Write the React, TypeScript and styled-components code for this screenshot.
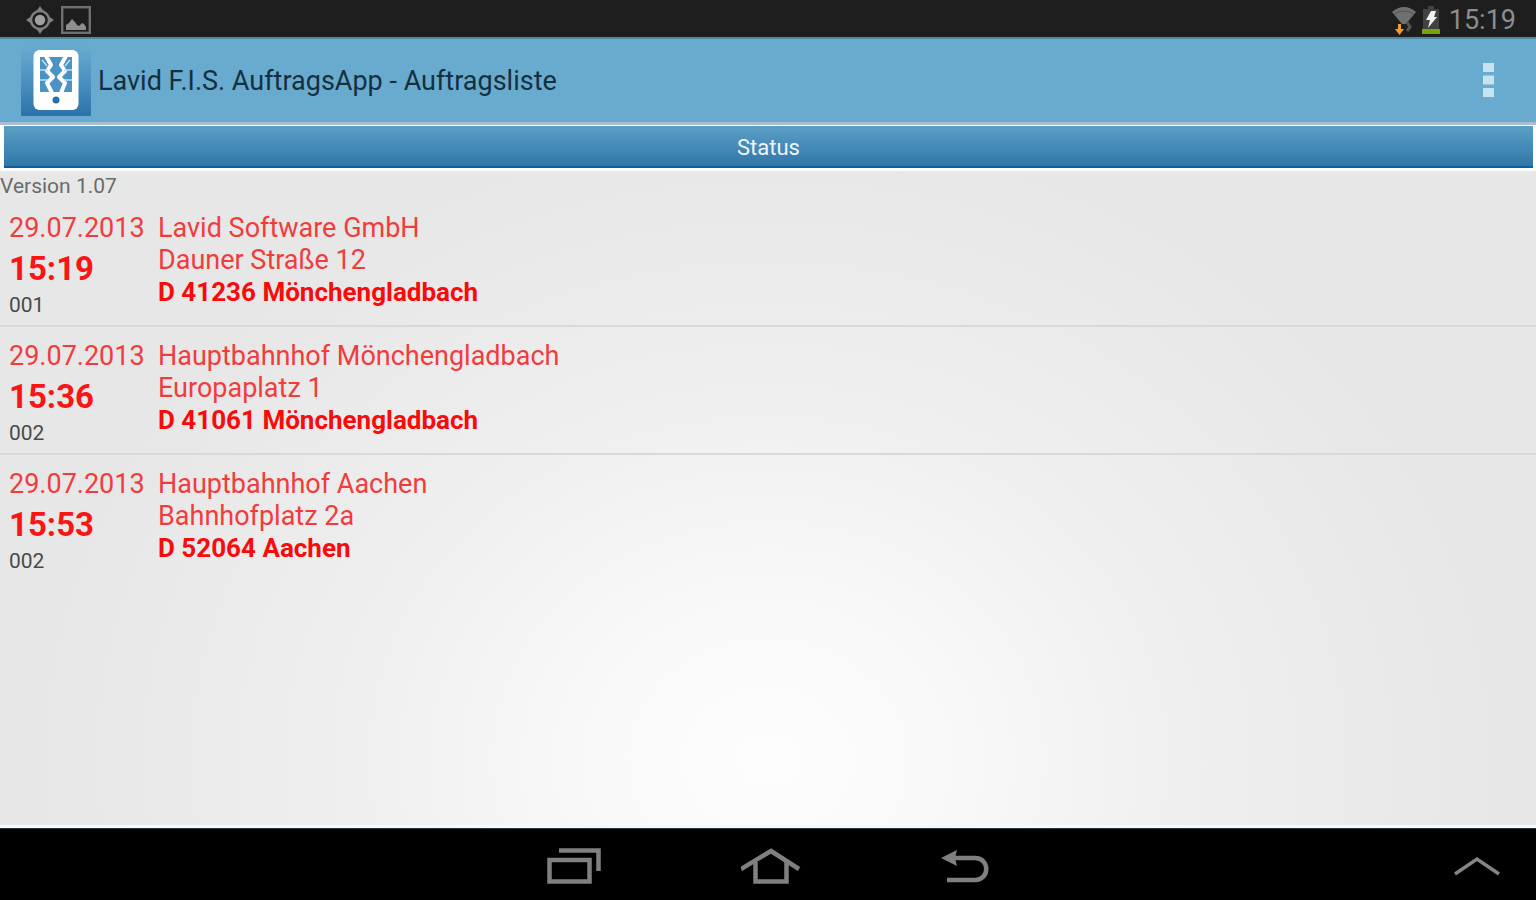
import React from "react";
import styled, { createGlobalStyle } from "styled-components";

const GlobalStyle = createGlobalStyle`
  *, *::before, *::after { box-sizing: border-box; }
  body { margin: 0; font-family: Roboto, "Liberation Sans", sans-serif; }
`;

const Screen = styled.div`
  min-height: 100vh;
  display: flex;
  flex-direction: column;
  background: #000;
`;

const SystemBar = styled.div`
  height: 37px;
  padding: 0 20px 0 26px;
  display: flex;
  align-items: center;
  justify-content: space-between;
  background: #1e1e1e;
  color: #8d8d8d;
`;

const IconGroup = styled.div<{ $gap: number }>`
  display: flex;
  align-items: center;
  gap: ${(p) => p.$gap}px;
  padding-top: 3px;
  svg { display: block; }
`;

const Clock = styled.time`
  padding-left: 4px;
  font-size: 27px;
  line-height: 32px;
`;

const AppBar = styled.header`
  height: 88px;
  padding: 0 42px 0 21px;
  display: flex;
  align-items: center;
  gap: 7px;
  background: #68abcf;
  border-top: 2px solid #4d88a8;
  border-bottom: 3px solid #a9bcd2;
`;

const Logo = styled.svg`
  display: block;
  flex: none;
`;

const Title = styled.h1`
  flex: 1;
  margin: 0;
  font-size: 27px;
  line-height: 32px;
  font-weight: 400;
  color: #14303f;
`;

const IconButton = styled.button`
  display: flex;
  padding: 0;
  border: 0;
  background: none;
  cursor: pointer;
  svg { display: block; }
`;

const StatusStrip = styled.div`
  display: flex;
  padding: 1px 3px 3px 4px;
  background: #fff;
`;

const StatusButton = styled.button`
  flex: 1;
  height: 42px;
  padding: 4px 0 0;
  border: 0;
  border-bottom: 2px solid #0d5f9b;
  background: linear-gradient(#5ba0c4, #468bb8 50%, #3077a8);
  color: #eef6fb;
  font-family: inherit;
  font-size: 22px;
  line-height: 26px;
  cursor: pointer;
`;

const Content = styled.main`
  flex: 1;
  border-bottom: 3px solid #f8f8fb;
  background: radial-gradient(ellipse 720px 620px at 50% 90%, #fdfdfd, #f9f9f9 24%, #efefef 58%, #e7e7e7);
`;

const Version = styled.p`
  margin: 0;
  padding-top: 3px;
  font-size: 21px;
  line-height: 25px;
  color: #6b6b6b;
`;

const OrderList = styled.ul`
  margin: 0;
  padding: 0;
  list-style: none;
`;

const OrderRow = styled.li`
  display: grid;
  grid-template-columns: 149px 1fr;
  height: 128px;
  padding: 13px 9px 0;
  color: #fb1414;
  border-bottom: 2px solid #d9d9d9;

  &:last-child { border-bottom: 0; }
`;

const Line = styled.div<{ $strong?: boolean }>`
  font-size: ${(p) => (p.$strong ? 26 : 27)}px;
  line-height: 32px;
  font-weight: ${(p) => (p.$strong ? 700 : 400)};
  color: ${(p) => (p.$strong ? "#fa0a0a" : "#f23c3c")};
`;

const Time = styled.div`
  font-size: 33px;
  line-height: 49px;
  font-weight: 700;
`;

const OrderNumber = styled.div`
  font-size: 21px;
  line-height: 24px;
  color: #4a4a4a;
`;

const NavBar = styled.nav`
  height: 72px;
  padding: 2px 36px 0;
  display: grid;
  grid-template-columns: 1fr auto 1fr;
  align-items: center;
  border-top: 1px solid #24384c;
  background: #000;
`;

const NavKeys = styled.div`
  grid-column: 2;
  display: flex;
  align-items: center;
  gap: 140px;
`;

const NavEnd = styled.div`
  display: flex;
  justify-content: flex-end;
`;

const orders = [
  { date: "29.07.2013", time: "15:19", number: "001", name: "Lavid Software GmbH", street: "Dauner Straße 12", city: "D 41236 Mönchengladbach" },
  { date: "29.07.2013", time: "15:36", number: "002", name: "Hauptbahnhof Mönchengladbach", street: "Europaplatz 1", city: "D 41061 Mönchengladbach" },
  { date: "29.07.2013", time: "15:53", number: "002", name: "Hauptbahnhof Aachen", street: "Bahnhofplatz 2a", city: "D 52064 Aachen" },
];

const GpsIcon = () => (
  <svg width="28" height="28" viewBox="0 0 28 28" fill="none" stroke="#808080">
    <circle cx="14" cy="14" r="9" strokeWidth="2.4" />
    <circle cx="14" cy="14" r="5.2" fill="#a0a0a0" stroke="none" />
    <path d="M14 0l3.5 5h-7zM14 28l3.5-5h-7zM0 14l5-3.5v7zM28 14l-5-3.5v7z" fill="#808080" stroke="none" />
  </svg>
);

const PictureIcon = () => (
  <svg width="30" height="28" viewBox="0 0 30 28">
    <rect x="1.2" y="1.2" width="27.6" height="25.6" fill="none" stroke="#707070" strokeWidth="2.4" />
    <path d="M5 24v-5l3-2 3-4 3 3 2 3 2 1 3-3 2 1 2 3v3z" fill="#8e8e8e" />
  </svg>
);

const WifiIcon = () => (
  <svg width="26" height="29" viewBox="0 0 26 29">
    <path d="M1 6Q13-4 25 6L15 18h-4z" fill="#707070" />
    <path d="M3 8Q13 2 23 8" fill="none" stroke="#555" strokeWidth="1" />
    <path d="M16 16l3 5-3 4" fill="none" stroke="#555" strokeWidth="3" />
    <path d="M7 18h3v5h3l-4.500 6L4 23h3z" fill="#f39a35" />
  </svg>
);

const BatteryIcon = () => (
  <svg width="18" height="28" viewBox="0 0 18 28">
    <path d="M6 0h6v3h5v25H1V3h5z" fill="#424242" />
    <rect x="0" y="23" width="18" height="5" fill="#77a30c" />
    <path d="M9 5h5l-2 6h3L6 22l2-8H4z" fill="#f2f2f2" />
  </svg>
);

const AppLogo = () => (
  <Logo width="70" height="70" viewBox="0 0 70 70" role="img" aria-label="Lavid">
    <defs>
      <linearGradient id="logoTile" x1="0" y1="0" x2="0" y2="1">
        <stop offset="0" stopColor="#68abcf" />
        <stop offset="0.5" stopColor="#4b92c2" />
        <stop offset="1" stopColor="#2c72ab" />
      </linearGradient>
    </defs>
    <rect width="70" height="70" fill="url(#logoTile)" />
    <rect x="12.500" y="4" width="45" height="60" rx="6" fill="#fff" />
    <rect x="19" y="11" width="32" height="35" fill="#4a93c3" />
    <path d="M25 10L30 19L26 25L32 31L26 37L31 47M45 10L40 19L44 25L38 31L44 37L40 47" fill="none" stroke="#fff" strokeWidth="4" strokeLinejoin="round" />
    <path d="M19 24h8M19 34h8M43 24h8M43 34h8M21 14l5 6M49 14l-5 6" stroke="#c2def0" strokeWidth="1.500" />
    <circle cx="35" cy="54" r="3.500" fill="#2571ad" />
  </Logo>
);

const OverflowIcon = () => (
  <svg width="11" height="35" viewBox="0 0 11 35" fill="#c8e3f0">
    <rect y="0" width="11" height="9" />
    <rect y="12.500" width="11" height="9" />
    <rect y="25" width="11" height="9" />
  </svg>
);

const RecentIcon = () => (
  <svg width="54" height="36" viewBox="0 0 54 36" fill="none" stroke="#808080">
    <rect x="2.500" y="12" width="40" height="21.500" strokeWidth="4.500" />
    <path d="M12 2.500h39.500V23" strokeWidth="4.500" />
  </svg>
);

const HomeIcon = () => (
  <svg width="60" height="36" viewBox="0 0 60 36" fill="none" stroke="#808080" strokeWidth="4.500">
    <path d="M0 21L30 3L58 21" />
    <path d="M14.500 14v19.500h31V14" />
  </svg>
);

const BackIcon = () => (
  <svg width="48" height="36" viewBox="0 0 48 36" fill="none">
    <path d="M12 10h22c15 0 15 22 0 22H6" stroke="#808080" strokeWidth="4.500" />
    <path d="M0 10L16 2l-2 8 2 8z" fill="#808080" />
  </svg>
);

const ExpandIcon = () => (
  <svg width="46" height="20" viewBox="0 0 46 20" fill="none" stroke="#858585" strokeWidth="3.500">
    <path d="M1 18L23 3L45 18" />
  </svg>
);

export default function App() {
  return (
    <Screen>
      <GlobalStyle />
      <SystemBar>
        <IconGroup $gap={7}>
          <GpsIcon />
          <PictureIcon />
        </IconGroup>
        <IconGroup $gap={5}>
          <WifiIcon />
          <BatteryIcon />
          <Clock>15:19</Clock>
        </IconGroup>
      </SystemBar>
      <AppBar>
        <AppLogo />
        <Title>Lavid F.I.S. AuftragsApp - Auftragsliste</Title>
        <IconButton type="button" aria-label="Menü">
          <OverflowIcon />
        </IconButton>
      </AppBar>
      <StatusStrip>
        <StatusButton type="button">Status</StatusButton>
      </StatusStrip>
      <Content>
        <Version>Version 1.07</Version>
        <OrderList>
          {orders.map((o) => (
            <OrderRow key={o.time}>
              <div>
                <Line>{o.date}</Line>
                <Time>{o.time}</Time>
                <OrderNumber>{o.number}</OrderNumber>
              </div>
              <div>
                <Line>{o.name}</Line>
                <Line>{o.street}</Line>
                <Line $strong>{o.city}</Line>
              </div>
            </OrderRow>
          ))}
        </OrderList>
      </Content>
      <NavBar>
        <NavKeys>
          <IconButton type="button" aria-label="Letzte Apps">
            <RecentIcon />
          </IconButton>
          <IconButton type="button" aria-label="Startseite">
            <HomeIcon />
          </IconButton>
          <IconButton type="button" aria-label="Zurück">
            <BackIcon />
          </IconButton>
        </NavKeys>
        <NavEnd>
          <IconButton type="button" aria-label="Erweitern">
            <ExpandIcon />
          </IconButton>
        </NavEnd>
      </NavBar>
    </Screen>
  );
}
